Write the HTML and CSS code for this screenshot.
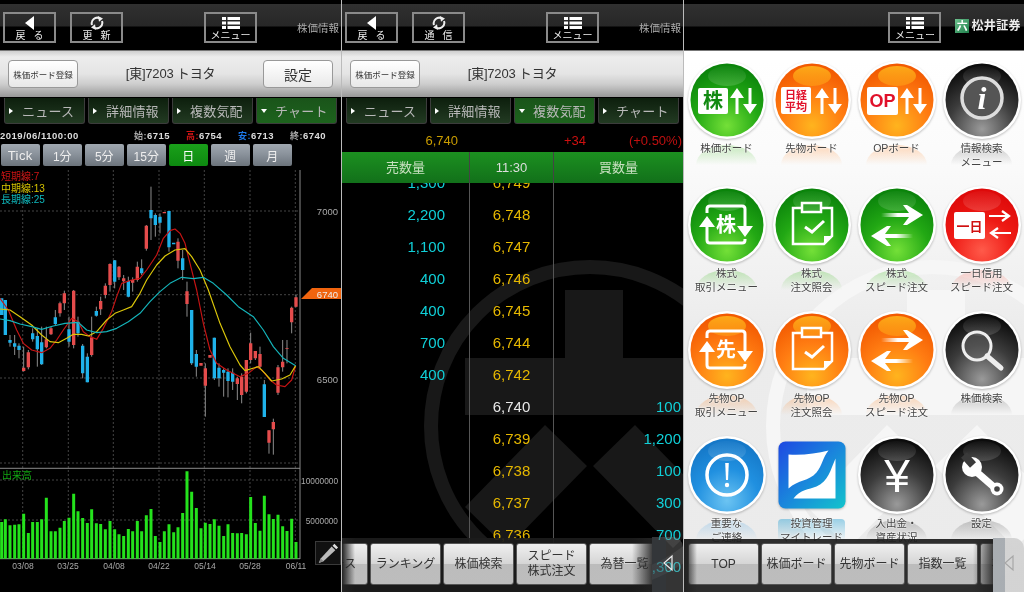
FILE: index.html
```html
<!DOCTYPE html>
<html lang="ja">
<head>
<meta charset="utf-8">
<title>株価情報</title>
<link rel="stylesheet" href="styles.css">
</head>
<body>
<svg class="sprite" width="0" height="0" aria-hidden="true">
  <defs>
    <radialGradient id="g-green" cx="50%" cy="85%" r="80%"><stop offset="0" stop-color="#74e038"/><stop offset=".55" stop-color="#22a814"/><stop offset="1" stop-color="#0b840b"/></radialGradient>
    <radialGradient id="g-orange" cx="50%" cy="85%" r="80%"><stop offset="0" stop-color="#ffb41e"/><stop offset=".55" stop-color="#ff7c12"/><stop offset="1" stop-color="#f25a02"/></radialGradient>
    <radialGradient id="g-red" cx="50%" cy="85%" r="80%"><stop offset="0" stop-color="#ff5a4a"/><stop offset=".55" stop-color="#ee1a14"/><stop offset="1" stop-color="#de0a0a"/></radialGradient>
    <radialGradient id="g-black" cx="50%" cy="90%" r="85%"><stop offset="0" stop-color="#9a9a9a"/><stop offset=".55" stop-color="#3c3c3c"/><stop offset="1" stop-color="#0c0c0c"/></radialGradient>
    <radialGradient id="g-blue" cx="50%" cy="85%" r="80%"><stop offset="0" stop-color="#6cc4f2"/><stop offset=".55" stop-color="#2090e0"/><stop offset="1" stop-color="#1578c8"/></radialGradient>
    <linearGradient id="g-hi" x1="0" y1="0" x2="0" y2="1"><stop offset="0" stop-color="#fff" stop-opacity=".03"/><stop offset="1" stop-color="#fff" stop-opacity=".16"/></linearGradient>
    <linearGradient id="g-hi-o" x1="0" y1="0" x2="0" y2="1"><stop offset="0" stop-color="#ffb81c" stop-opacity=".85"/><stop offset="1" stop-color="#ffa818" stop-opacity=".5"/></linearGradient>
    <linearGradient id="g-trade" x1="0" y1="0" x2="1" y2="1"><stop offset="0" stop-color="#1e48e2"/><stop offset=".5" stop-color="#1a86dc"/><stop offset="1" stop-color="#12c4cc"/></linearGradient>
    <linearGradient id="g-tail-r" x1="0" y1="0" x2="1" y2="0"><stop offset="0" stop-color="#fff" stop-opacity="0"/><stop offset=".4" stop-color="#fff"/></linearGradient>
    <linearGradient id="g-tail-l" x1="1" y1="0" x2="0" y2="0"><stop offset="0" stop-color="#fff" stop-opacity="0"/><stop offset=".4" stop-color="#fff"/></linearGradient>

    <symbol id="b-green" viewBox="0 0 80 80"><circle cx="40" cy="40" r="39" fill="#fff"/><circle cx="40" cy="40" r="36.5" fill="url(#g-green)"/><ellipse cx="40" cy="16" rx="19" ry="10" fill="url(#g-hi)"/></symbol>
    <symbol id="b-orange" viewBox="0 0 80 80"><circle cx="40" cy="40" r="39" fill="#fff"/><circle cx="40" cy="40" r="36.5" fill="url(#g-orange)"/><ellipse cx="40" cy="16" rx="19" ry="10" fill="url(#g-hi-o)"/></symbol>
    <symbol id="b-red" viewBox="0 0 80 80"><circle cx="40" cy="40" r="39" fill="#fff"/><circle cx="40" cy="40" r="36.5" fill="url(#g-red)"/><ellipse cx="40" cy="16" rx="19" ry="10" fill="url(#g-hi)"/></symbol>
    <symbol id="b-black" viewBox="0 0 80 80"><circle cx="40" cy="40" r="39" fill="#fff"/><circle cx="40" cy="40" r="36.5" fill="url(#g-black)"/><ellipse cx="40" cy="16" rx="19" ry="10" fill="url(#g-hi)"/></symbol>
    <symbol id="b-blue" viewBox="0 0 80 80"><circle cx="40" cy="40" r="39" fill="#fff"/><circle cx="40" cy="40" r="36.5" fill="url(#g-blue)"/><ellipse cx="40" cy="16" rx="19" ry="10" fill="url(#g-hi)"/></symbol>

    <symbol id="m-updown" viewBox="0 0 80 80"><path d="M50 28L57 38H51.500V54H48.500V38H43ZM63 54L70 44H64.500V28H61.500V44H56Z" fill="#fff"/></symbol>
    <symbol id="m-trade" viewBox="0 0 80 80"><path d="M58 44V24Q58 21 55 21H23Q20 21 20 24V28M58 54V55Q58 58 55 58H23Q20 58 20 55V40" class="st"/><path d="M20 31L28 42H12ZM58 52L66 41H50Z" fill="#fff"/></symbol>
    <symbol id="m-clip" viewBox="0 0 80 80"><path d="M30 23H21V59H52L60 51V23H49" class="st st3"/><path d="M30 18H49V27H30Z" class="st st3"/><path d="M52 59L52 51H60Z" fill="#fff"/><path d="M33 42L40 47L52 36" class="st"/></symbol>
    <symbol id="m-speed" viewBox="0 0 80 80"><path d="M24 28H52L46 20H50L66 30L50 40H46L52 32H24Z" fill="url(#g-tail-r)"/><path d="M56 49H28L34 41H30L14 51L30 61H34L28 53H56Z" fill="url(#g-tail-l)"/></symbol>

    <symbol id="i-back" viewBox="0 0 20 14"><path d="M14 0V14L5 7Z" fill="#fff"/></symbol>
    <symbol id="i-refresh" viewBox="0 0 20 14"><path d="M5 9A5.500 5.500 0 0 1 13 2.500M15 5A5.500 5.500 0 0 1 7 11.500" fill="none" stroke="#eee" stroke-width="2"/><path d="M11 0L16 2.600L12 5.800ZM9 14L4 11.400L8 8.200Z" fill="#eee"/></symbol>
    <symbol id="i-menu" viewBox="0 0 20 14"><path d="M1 1h4v3h-4zM6.500 1h12.500v3h-12.500zM1 5.500h4v3h-4zM6.500 5.500h12.500v3h-12.500zM1 10h4v3h-4zM6.500 10h12.500v3h-12.500z" fill="#fff"/></symbol>
    <symbol id="i-handle" viewBox="0 0 14 20"><path d="M11 3V17L3 10Z" fill="none" stroke="#eee" stroke-width="1.200"/></symbol>
    <symbol id="wm" viewBox="0 0 342 592"><circle cx="248" cy="426" r="159" fill="none" stroke-width="14" class="wm-ring"/><path d="M223 290H281V358H380V415H123V358H223ZM203 425L245 466L165 548L123 507ZM293 425L251 466L331 548L373 507Z" class="wm-fill"/></symbol>
  </defs>
</svg>

<main class="screen">

  <!-- 1: chart -->
  <section class="panel dark">
    <header class="topbar">
      <button class="navbtn"><svg class="navicon"><use href="#i-back"/></svg><span>戻 る</span></button>
      <button class="navbtn"><svg class="navicon"><use href="#i-refresh"/></svg><span>更 新</span></button>
      <button class="navbtn menu"><svg class="navicon"><use href="#i-menu"/></svg><span>メニュー</span></button>
      <span class="pagename">株価情報</span>
    </header>
    <div class="toolbar">
      <button class="regbtn">株価ボード登録</button>
      <h1 class="title">[東]7203 トヨタ</h1>
      <button class="setbtn">設定</button>
    </div>
    <nav class="tabs">
      <a class="tab">ニュース</a><a class="tab">詳細情報</a><a class="tab">複数気配</a><a class="tab on">チャート</a>
    </nav>
    <div class="ohlc">
      <span class="ohlc-date">2019/06/1100:00</span>
      <span class="ohlc-item"><b class="c-grey">始:</b>6715</span>
      <span class="ohlc-item"><b class="c-red">高:</b>6754</span>
      <span class="ohlc-item"><b class="c-blue">安:</b>6713</span>
      <span class="ohlc-item"><b class="c-grey">終:</b>6740</span>
    </div>
    <div class="ranges">
      <button class="range tick">Tick</button><button class="range">1分</button><button class="range">5分</button><button class="range">15分</button><button class="range on">日</button><button class="range">週</button><button class="range">月</button>
    </div>
    <div class="chart">
      <div class="legend"><span class="c-red">短期線:7</span><span class="c-yellow">中期線:13</span><span class="c-cyan">長期線:25</span></div>
      <svg class="chart-svg" viewBox="0 166 342 426" width="342" height="426">
        <g class="grid">
          <path d="M22.700 170V559M68.300 170V559M113.300 170V559M159 170V559M204.300 170V559M250 170V559M295.300 170V559"/>
          <path d="M0 211H300M0 294.700H300M0 378H300M0 463H300M0 480H300M0 520H300"/>
        </g>
        <path class="axis" d="M300 170V559M0 468.300H300M0 558.700H300"/>
        <g transform="translate(0 200) scale(.33333)">
          <path class="wick" d="M30 405V440M44 405V465M57 430V475M71 440V515M85 450V508M98 385V425M112 385V500M125 380V495M139 380V445M153 380V405M166 330V375M180 305V350M193 272V330M207 350V440M221 270V445M234 350V410M248 432V535M262 460V547M275 350V470M289 320V350M302 290V345M316 250V295M330 190V275M344 180V265M357 198V240M371 225V270M385 230V292M398 232V275M412 185V245M425 178V225M439 75V152M453 -40V120M466 40V110M480 40V100M507 33V155M534 115V205M548 150V240M561 245V350M575 330V495M589 450V530M616 490V650M643 413V540M657 490V560M671 505V590M684 505V592M698 505V570M712 530V600M725 520V610M739 480V580M752 398V490M766 453V480M780 440V505M793 540V651M807 691V761M820 656V764M834 495V585M848 420V515M861 420V490M875 320V400M888 285V322"/>
          <path class="body-blue" d="M5 295V345M16 300V405M30 420V428M44 430V440M57 437V450M98 400V418M112 408V448M125 427V493M166 352V372M207 388V425M234 365V400M248 437V520M262 470V547M289 333V347M344 181V245M385 243V290M425 205V220M453 30V55M466 45V75M480 50V68M507 33V142M521 128V133M548 175V210M575 330V490M589 462V500M643 413V535M657 503V535M671 510V518M684 515V543M698 518V545M793 553V651"/>
          <path class="body-red" d="M71 503V513M85 457V502M139 418V442M153 385V403M180 310V340M193 280V310M221 272V435M275 412V465M302 303V328M316 257V285M330 192V255M357 200V232M371 235V244M398 240V248M412 200V240M439 77V146M493 36V40M534 125V182M561 274V312M603 489V497M616 505V557M630 465V473M712 535V552M725 530V585M739 480V575M752 430V480M766 453V475M780 462V500M807 691V728M820 666V688M834 502V578M848 485V502M861 445V447M875 323V367M888 292V320"/>
          <polyline class="ma ma-red" points="0,295 25,330 50,390 70,430 95,450 125,458 150,445 170,420 190,390 215,355 235,365 250,395 270,410 290,418 310,385 335,335 350,290 365,250 395,240 420,235 440,210 470,165 490,115 510,92 525,87 540,100 555,130 570,190 590,270 610,370 630,450 650,490 680,510 720,530 745,520 770,500 785,510 810,540 830,555 855,560 875,540 887,497"/>
          <polyline class="ma ma-yellow" points="0,327 30,330 60,350 95,375 125,405 150,425 175,428 200,415 220,403 245,403 265,408 290,395 320,360 345,340 370,330 395,320 420,280 440,240 470,195 495,168 525,150 555,146 575,170 600,210 625,270 660,370 690,440 720,495 735,512 775,500 795,520 815,543 845,537 870,525 887,497"/>
          <polyline class="ma ma-cyan" points="0,357 30,362 60,372 95,380 125,388 160,378 195,370 235,367 260,390 290,398 320,395 350,385 385,365 420,340 450,305 480,275 510,250 545,232 580,236 610,232 640,250 680,285 715,320 760,350 790,390 820,440 850,475 887,497"/>
        </g>
        <g transform="translate(0 392) scale(.33333)">
          <path class="vol" d="M5 390V500M16 382V500M30 400V500M44 398V500M57 397V500M71 365V500M85 423V500M98 390V500M112 390V500M125 382V500M139 317V500M153 418V500M166 418V500M180 407V500M193 387V500M207 377V500M221 305V500M234 358V500M248 378V500M262 393V500M275 352V500M289 394V500M302 396V500M316 412V500M330 387V500M344 412V500M357 427V500M371 432V500M385 411V500M398 418V500M412 387V500M425 418V500M439 370V500M453 351V500M466 432V500M480 450V500M493 418V500M507 397V500M521 421V500M534 406V500M548 363V500M561 238V500M575 299V500M589 348V500M603 409V500M616 392V500M630 396V500M643 382V500M657 401V500M671 432V500M684 397V500M698 423V500M712 424V500M725 423V500M739 427V500M752 315V500M766 393V500M780 416V500M793 311V500M807 367V500M820 381V500M834 368V500M848 403V500M861 417V500M875 380V500M888 450V500"/>
        </g>
        <path class="tag" d="M312 288H342V299H301Z"/>
        <text class="ax ax-r" x="338" y="215">7000</text>
        <text class="ax ax-tag" x="338" y="298">6740</text>
        <text class="ax ax-r" x="338" y="383">6500</text>
        <text class="ax ax-vol" x="338" y="484">10000000</text>
        <text class="ax ax-vol" x="338" y="524">5000000</text>
        <text class="ax-vlabel c-green" x="2" y="479">出来高</text>
        <text class="ax ax-c" x="23" y="569">03/08</text>
        <text class="ax ax-c" x="68" y="569">03/25</text>
        <text class="ax ax-c" x="114" y="569">04/08</text>
        <text class="ax ax-c" x="159" y="569">04/22</text>
        <text class="ax ax-c" x="205" y="569">05/14</text>
        <text class="ax ax-c" x="250" y="569">05/28</text>
        <text class="ax ax-c" x="296" y="569">06/11</text>
      </svg>
      <button class="pencil" aria-label="描画"><svg viewBox="0 0 24 24" width="22" height="22"><path d="M4 18L16 5L20 9L7 21L2 23Z" fill="#bbb"/><path d="M17 4L19 2L23 6L21 8Z" fill="#ddd"/><path d="M4 18L7 21L2 23Z" fill="#888"/></svg></button>
    </div>
  </section>

  <!-- 2: order book -->
  <section class="panel dark">
    <svg class="watermark wm-dark" viewBox="0 0 342 592"><use href="#wm"/></svg>
    <header class="topbar">
      <button class="navbtn"><svg class="navicon"><use href="#i-back"/></svg><span>戻 る</span></button>
      <button class="navbtn"><svg class="navicon"><use href="#i-refresh"/></svg><span>通 信</span></button>
      <button class="navbtn menu"><svg class="navicon"><use href="#i-menu"/></svg><span>メニュー</span></button>
      <span class="pagename">株価情報</span>
    </header>
    <div class="toolbar">
      <button class="regbtn">株価ボード登録</button>
      <h1 class="title">[東]7203 トヨタ</h1>
    </div>
    <nav class="tabs">
      <a class="tab">ニュース</a><a class="tab">詳細情報</a><a class="tab on">複数気配</a><a class="tab">チャート</a>
    </nav>
    <div class="quote">
      <span class="q-last">6,740</span><span class="q-chg">+34</span><span class="q-pct">(+0.50%)</span>
    </div>
    <div class="book-head"><span>売数量</span><span class="bh-time">11:30</span><span>買数量</span></div>
    <div class="book">
      <div class="row first"><span class="sell">1,300</span><span class="price">6,749</span><span class="buy"></span></div>
      <div class="row"><span class="sell">2,200</span><span class="price">6,748</span><span class="buy"></span></div>
      <div class="row"><span class="sell">1,100</span><span class="price">6,747</span><span class="buy"></span></div>
      <div class="row"><span class="sell">400</span><span class="price">6,746</span><span class="buy"></span></div>
      <div class="row"><span class="sell">400</span><span class="price">6,745</span><span class="buy"></span></div>
      <div class="row"><span class="sell">700</span><span class="price">6,744</span><span class="buy"></span></div>
      <div class="row"><span class="sell">400</span><span class="price">6,742</span><span class="buy"></span></div>
      <div class="row"><span class="sell"></span><span class="price now">6,740</span><span class="buy">100</span></div>
      <div class="row"><span class="sell"></span><span class="price">6,739</span><span class="buy">1,200</span></div>
      <div class="row"><span class="sell"></span><span class="price">6,738</span><span class="buy">100</span></div>
      <div class="row"><span class="sell"></span><span class="price">6,737</span><span class="buy">300</span></div>
      <div class="row"><span class="sell"></span><span class="price">6,736</span><span class="buy">700</span></div>
      <div class="row"><span class="sell"></span><span class="price"></span><span class="buy">1,300</span></div>
    </div>
    <div class="dock dock-book">
      <div class="dock-row">
        <button class="dockbtn">ニュース</button><button class="dockbtn">ランキング</button><button class="dockbtn">株価検索</button><button class="dockbtn">スピード<br>株式注文</button><button class="dockbtn">為替一覧</button>
      </div>
      <div class="handle"><svg class="handle-ico"><use href="#i-handle"/></svg></div>
    </div>
  </section>

  <!-- 3: home menu -->
  <section class="panel light">
    <svg class="watermark wm-light" viewBox="0 0 342 592"><use href="#wm"/></svg>
    <header class="topbar">
      <button class="navbtn menu"><svg class="navicon"><use href="#i-menu"/></svg><span>メニュー</span></button>
      <span class="logo"><i class="logo-mark">六</i>松井証券</span>
    </header>
    <div class="menu-grid">
      <a class="cell r-green"><svg class="icon" viewBox="0 0 80 80"><use href="#b-green"/><rect x="11" y="28" width="30" height="26" rx="2" fill="#fff"/><text x="26" y="48" class="g-txt g20 t-green">株</text><use href="#m-updown"/></svg><span class="label">株価ボード</span></a>
      <a class="cell r-orange"><svg class="icon" viewBox="0 0 80 80"><use href="#b-orange"/><rect x="9" y="27" width="30" height="27" rx="2" fill="#fff"/><text x="24" y="39" class="g-txt g12 t-red">日経</text><text x="24" y="51" class="g-txt g12 t-red">平均</text><use href="#m-updown"/></svg><span class="label">先物ボード</span></a>
      <a class="cell r-orange"><svg class="icon" viewBox="0 0 80 80"><use href="#b-orange"/><rect x="10" y="27" width="31" height="28" rx="2" fill="#fff"/><text x="25.500" y="47" class="g-latin t-red">OP</text><use href="#m-updown"/></svg><span class="label">OPボード</span></a>
      <a class="cell r-black"><svg class="icon" viewBox="0 0 80 80"><use href="#b-black"/><circle cx="40" cy="38" r="20" fill="#555" stroke="#ddd" stroke-width="3.500"/><text x="40" y="49" class="g-i">i</text></svg><span class="label">情報検索<br>メニュー</span></a>

      <a class="cell r-green"><svg class="icon" viewBox="0 0 80 80"><use href="#b-green"/><use href="#m-trade"/><text x="39" y="47" class="g-txt g20 t-white">株</text></svg><span class="label">株式<br>取引メニュー</span></a>
      <a class="cell r-green"><svg class="icon" viewBox="0 0 80 80"><use href="#b-green"/><use href="#m-clip"/></svg><span class="label">株式<br>注文照会</span></a>
      <a class="cell r-green"><svg class="icon" viewBox="0 0 80 80"><use href="#b-green"/><use href="#m-speed"/></svg><span class="label">株式<br>スピード注文</span></a>
      <a class="cell r-red"><svg class="icon" viewBox="0 0 80 80"><use href="#b-red"/><rect x="12" y="27" width="31" height="27" rx="2" fill="#fff"/><text x="27.500" y="46" class="g-txt g14 t-dred">一日</text><path d="M47 31H66M60 26L67 31L60 36M69 48H50M56 43L49 48L56 53" class="st st2"/></svg><span class="label">一日信用<br>スピード注文</span></a>

      <a class="cell r-orange"><svg class="icon" viewBox="0 0 80 80"><use href="#b-orange"/><use href="#m-trade"/><text x="39" y="47" class="g-txt g20 t-white">先</text></svg><span class="label">先物OP<br>取引メニュー</span></a>
      <a class="cell r-orange"><svg class="icon" viewBox="0 0 80 80"><use href="#b-orange"/><use href="#m-clip"/></svg><span class="label">先物OP<br>注文照会</span></a>
      <a class="cell r-orange"><svg class="icon" viewBox="0 0 80 80"><use href="#b-orange"/><use href="#m-speed"/></svg><span class="label">先物OP<br>スピード注文</span></a>
      <a class="cell r-black"><svg class="icon" viewBox="0 0 80 80"><use href="#b-black"/><circle cx="35" cy="36" r="14" fill="#666" fill-opacity=".5" stroke="#eee" stroke-width="3"/><path d="M45 46L59 58" class="st st5"/></svg><span class="label">株価検索</span></a>

      <a class="cell r-blue"><svg class="icon" viewBox="0 0 80 80"><use href="#b-blue"/><circle cx="40" cy="40" r="20" fill="none" stroke="#fff" stroke-width="3.500"/><path d="M38.200 28H41.800L41 45H39Z" fill="#fff"/><circle cx="40" cy="50" r="2.200" fill="#fff"/></svg><span class="label">重要な<br>ご連絡</span></a>
      <a class="cell r-app"><svg class="icon" viewBox="-6.500 -6.500 80 80"><rect width="67" height="67" rx="7" fill="url(#g-trade)"/><path d="M10 13C24 14 38 12 50 9C44 16 44 24 38 31C30 40 20 38 10 47Z" fill="#fff"/><path d="M15 57C22 48 30 48 38 45C50 40 52 28 57 17V57Z" fill="#fff"/></svg><span class="label">投資管理<br>マイトレード</span></a>
      <a class="cell r-black"><svg class="icon" viewBox="0 0 80 80"><use href="#b-black"/><text x="40" y="57" class="g-yen">¥</text></svg><span class="label">入出金・<br>資産状況</span></a>
      <a class="cell r-black"><svg class="icon" viewBox="0 0 80 80"><use href="#b-black"/><path d="M30 33L53 53" class="st st7"/><circle cx="30" cy="32" r="10" fill="#fff"/><path d="M31 30L22 20" stroke="#3a3a3a" stroke-width="8"/><circle cx="55" cy="54" r="6.500" fill="#fff"/><circle cx="55" cy="54" r="2.800" fill="#444"/></svg><span class="label">設定</span></a>
    </div>
    <div class="dock dock-menu">
      <div class="dock-row">
        <button class="dockbtn">TOP</button><button class="dockbtn">株価ボード</button><button class="dockbtn">先物ボード</button><button class="dockbtn">指数一覧</button><button class="dockbtn">為替一覧</button>
      </div>
      <div class="handle"><svg class="handle-ico"><use href="#i-handle"/></svg></div>
    </div>
  </section>
</main>
</body>
</html>
```
FILE: styles.css
```css
* { box-sizing: border-box; }
html, body { margin: 0; padding: 0; background: #000; }
body { font-family: "Liberation Sans", "Noto Sans CJK JP", sans-serif; }
button { font-family: inherit; padding: 0; cursor: pointer; }
.sprite { position: absolute; }

.screen { display: flex; width: 1024px; height: 592px; overflow: hidden; gap: 1px; background: #bbb; }
.panel { position: relative; isolation: isolate; flex: 0 0 341px; height: 592px; overflow: hidden; display: flex; flex-direction: column; filter: blur(.35px); }
.panel:last-child { flex-basis: 340px; }
.panel.dark { background: #000; }
.panel.light { background: linear-gradient(#fff 60px, #fafafa 170px, #ececec 330px, #ebebeb); }

/* top bar */
.topbar { position: relative; flex: 0 0 51px; display: flex; align-items: flex-start; padding: 12px 0 0 3px; border-bottom: 1px solid #777;
  background: linear-gradient(#000 4px, #303030 4px, #272727 26px, #000 27px); }
.navbtn { flex: 0 0 53px; height: 31px; margin-right: 14px; display: flex; flex-direction: column; align-items: center; justify-content: flex-start; border: 2px solid #8a8a8a; background: none; color: #eee; font-size: 10px; line-height: 11px; word-spacing: 5px; }
.navicon { width: 20px; height: 14px; margin: 2px 0 0; }
.navbtn.menu { margin-left: auto; margin-right: 39px; }
.pagename { position: absolute; top: 21px; right: 2px; color: #aaa; font-size: 10.500px; line-height: 14px; }
.dark .navbtn:nth-child(3) { margin-left: 67px; margin-right: auto; }
.light .navbtn.menu { margin-right: 14px; }
.logo { display: flex; align-items: center; gap: 2px; margin: 7px 3px 0 0; color: #eee; font-size: 12px; font-weight: 700; letter-spacing: .4px; line-height: 14px; }
.logo-mark { display: block; width: 14px; height: 14px; background: linear-gradient(135deg, #6fc28f, #1d7f4a); color: #fff; font-style: normal; font-size: 11px; line-height: 14px; text-align: center; }

/* toolbar */
.toolbar { flex: 0 0 46px; display: flex; align-items: center; padding: 0 8px; position: relative; background: linear-gradient(#cfcfcf, #ededed 6px, #e4e4e4 50%, #cdcdcd 72%, #989898); }
.regbtn, .setbtn { flex: 0 0 70px; height: 28px; border: 1px solid #999; border-radius: 4px; background: linear-gradient(#fff, #f4f4f4 50%, #e8e8e8); color: #333; }
.regbtn { font-size: 8.500px; font-weight: 400; }
.setbtn { font-size: 14px; }
.title { flex: 1; margin: 0 0 1px; color: #333; font-size: 13px; font-weight: 400; letter-spacing: -.2px; text-align: center; line-height: 18px; }
.toolbar .title:last-child { padding-right: 70px; }

/* tabs */
.tabs { flex: 0 0 29px; display: flex; gap: 3px; padding: 1px 4px 0; background: #000; }
.tab { flex: 1; height: 26px; display: flex; align-items: center; gap: 9px; padding-left: 4px; border: 1px solid #3c3c3c; border-top: 0; border-radius: 0 0 3px 3px; background: linear-gradient(#0d1f0d, #223a22); color: #b8b8b8; font-size: 13px; letter-spacing: .2px; }
.tab::before { content: ""; border-left: 4px solid #fff; border-top: 3px solid transparent; border-bottom: 3px solid transparent; }
.tab.on { background: linear-gradient(#1a541a, #1d631d); }
.tab.on::before { border-left: 3.500px solid transparent; border-right: 3.500px solid transparent; border-top: 4px solid #fff; border-bottom: 0; margin-right: -1px; }

/* OHLC */
.ohlc { flex: 0 0 18px; display: flex; align-items: center; color: #ddd; font-size: 9.500px; font-weight: 700; letter-spacing: .5px; }
.ohlc-date { flex: 0 0 134px; }
.ohlc-item { flex: 0 0 52px; white-space: nowrap; }
.ohlc b { font-weight: 700; font-size: 9px; }
.c-grey { color: #aaa; } .c-red { color: #d01414; } .c-blue { color: #1d78e8; }
.c-yellow { color: #d7c400; } .c-cyan { color: #0fb9bd; } .c-green { fill: #12a812; }

.ranges { flex: 0 0 22px; display: flex; gap: 2.500px; padding-left: .5px; }
.range { flex: 0 0 39.500px; border: 0; border-radius: 2px; background: linear-gradient(#a0a8b0, #8b939c 45%, #6c747c); color: #eee; font-size: 12px; font-weight: 400; }
.range.tick { font-size: 13px; letter-spacing: .4px; }
.range.on { background: linear-gradient(#1aa01a, #0d8a10); color: #fff; }

/* chart */
.chart { position: relative; flex: 1; }
.chart-svg { display: block; }
.legend { position: absolute; top: 5px; left: 1px; display: flex; flex-direction: column; font-size: 10px; line-height: 11.500px; }
.grid path { fill: none; stroke: #444; stroke-dasharray: 2 2; }
.axis { fill: none; stroke: #8a8a8a; stroke-width: 1; }
.wick { fill: none; stroke: #8d8d8d; stroke-width: 3; }
.body-blue { fill: none; stroke: #1fb2ea; stroke-width: 10; }
.body-red { fill: none; stroke: #e44c4c; stroke-width: 10; }
.ma { fill: none; stroke-width: 3.500; stroke-linejoin: round; }
.ma-red { stroke: #c71414; } .ma-yellow { stroke: #dcc70a; } .ma-cyan { stroke: #14b4ba; }
.vol { fill: none; stroke: #24e21c; stroke-width: 9; }
.tag { fill: #f0640e; }
.ax { fill: #aaa; font-size: 9.500px; font-family: "Liberation Sans", sans-serif; }
.ax-r { text-anchor: end; }
.ax-tag { text-anchor: end; fill: #eee; }
.ax-vol { text-anchor: end; font-size: 8.300px; }
.ax-c { text-anchor: middle; font-size: 8.500px; }
.ax-vlabel { font-size: 10px; font-family: "Noto Sans CJK JP", sans-serif; }
.pencil { position: absolute; right: 0; top: 375px; width: 26px; height: 24px; display: flex; align-items: center; justify-content: center; border: 1px solid #3a3a3a; background: #111; }

/* order book */
.watermark { position: absolute; left: 0; top: 0; width: 342px; height: 592px; z-index: -1; }
.wm-dark use { stroke: none; fill: #181818; }
.wm-dark { color: #181818; }
.wm-light { color: #f6f6f6; }
.wm-light use { fill: #f6f6f6; }
.wm-ring { fill: none; stroke: currentColor; }
.quote { flex: 0 0 26px; display: flex; align-items: center; padding-top: 2px; font-size: 13px; }
.q-last { flex: 0 0 116px; text-align: right; color: #c99c00; }
.q-chg { flex: 0 0 128px; text-align: right; color: #cf1010; }
.q-pct { flex: 1; text-align: right; padding-right: 1px; color: #c01010; }
.book-head, .row { display: grid; grid-template-columns: 127px 85px 1fr; }
.book-head { flex: 0 0 31px; align-items: center; background: linear-gradient(#1c9020, #12701a); color: #c8e0c0; font-size: 13px; text-align: center; }
.book-head span { line-height: 31px; }
.book-head .bh-time { color: #ddd; border-left: 1px solid #444; border-right: 1px solid #444; }
.book { flex: 1; overflow: hidden; }
.row { height: 32px; font-size: 15px; line-height: 32px; }
.row.first { margin-top: -16px; }
.sell { text-align: right; padding-right: 24px; color: #10d0d8; }
.price { text-align: center; color: #e6b800; border-left: 1px solid #555; border-right: 1px solid #555; }
.price.now { color: #e8e8e8; }
.buy { text-align: right; padding-right: 2px; color: #10d0d8; }

/* dock */
.dock { position: absolute; left: 0; right: 0; bottom: 0; height: 54px; }
.dock-menu { height: 53px; }
.dock-row { position: absolute; left: 0; right: 31px; top: 0; bottom: 0; display: flex; gap: 2px; padding-top: 5px; overflow: hidden; background: rgba(28,28,28,.92); }
.dock-menu .dock-row { padding-top: 4px; padding-left: 4px; }
.dockbtn { flex: 0 0 71px; height: 42px; border: 1px solid #555; border-radius: 3px; background: linear-gradient(#efefef, #d5d5d5 50%, #bcbcbc 50%, #bdbdbd); color: #333; font-size: 12px; line-height: 15px; }
.dock::before, .dock::after { content: ""; position: absolute; top: 0; bottom: 0; z-index: 1; pointer-events: none; }
.dock::before { left: 0; width: 13px; background: linear-gradient(90deg, #222, rgba(34,34,34,0)); }
.dock::after { right: 31px; width: 20px; background: linear-gradient(270deg, rgba(34,34,34,.85), rgba(34,34,34,0)); }
.dock-book .dockbtn:first-child { margin-left: -45px; }
.handle { position: absolute; right: 0; top: -1px; bottom: 0; width: 31px; display: flex; align-items: center; justify-content: center; padding-bottom: 4px; border-radius: 0 10px 0 0; z-index: 2; }
.dock-book .handle { background: linear-gradient(90deg, rgba(85,90,95,.6) 0 45%, rgba(130,130,130,.4) 45%); }
.dock-menu .handle { background: linear-gradient(90deg, rgba(165,170,175,.95) 0 40%, rgba(210,210,210,.95) 40%); }
.handle-ico { width: 14px; height: 20px; }
.dock-menu .handle-ico { filter: brightness(.7); }

/* home menu */
.menu-grid { display: grid; grid-template-columns: repeat(4, 85px); grid-auto-rows: 125px; padding-top: 9px; }
.cell { position: relative; display: flex; flex-direction: column; align-items: center; color: #444; }
.cell::before { content: ""; position: absolute; left: 12px; top: 85px; width: 61px; height: 20px; border-radius: 50% 50% 0 0 / 100% 100% 0 0; background: linear-gradient(var(--tone), rgba(255,255,255,0)); }
.r-green { --tone: rgba(70,190,40,.3); }
.r-orange { --tone: rgba(255,130,30,.3); }
.r-red { --tone: rgba(240,60,40,.25); }
.r-black { --tone: rgba(70,70,70,.28); }
.r-blue { --tone: rgba(60,160,230,.25); }
.r-app { --tone: rgba(40,160,210,.45); }
.r-app::before { border-radius: 4px; top: 84px; left: 9px; width: 67px; height: 22px; }
.icon { width: 80px; height: 80px; flex: none; filter: drop-shadow(0 1px 1px rgba(0,0,0,.25)); }
.label { position: relative; margin-top: 1px; font-size: 10.500px; line-height: 14px; text-align: center; white-space: nowrap; text-shadow: 0 0 2px #fff, 0 0 2px #fff; }

/* icon marks */
.st { fill: none; stroke: #fff; stroke-width: 3; stroke-linejoin: miter; }
.st2 { stroke-width: 2.200; }
.st3 { stroke-width: 2.500; }
.st5 { stroke: #eee; stroke-width: 5; stroke-linecap: round; }
.st7 { stroke-width: 7; }
.g-txt { text-anchor: middle; font-family: "Noto Sans CJK JP", sans-serif; font-weight: 700; }
.g20 { font-size: 20px; } .g14 { font-size: 13px; } .g12 { font-size: 11px; }
.g-latin { text-anchor: middle; font-family: "Liberation Sans", sans-serif; font-weight: 700; font-size: 18px; }
.g-i { text-anchor: middle; font-family: "Liberation Serif", serif; font-style: italic; font-weight: 700; font-size: 32px; fill: #fff; }
.g-yen { text-anchor: middle; font-family: "Liberation Sans", sans-serif; font-weight: 400; font-size: 46px; fill: #fff; }
.t-green { fill: #128a12; } .t-red { fill: #e0102a; } .t-white { fill: #fff; } .t-dred { fill: #d01010; }
```
